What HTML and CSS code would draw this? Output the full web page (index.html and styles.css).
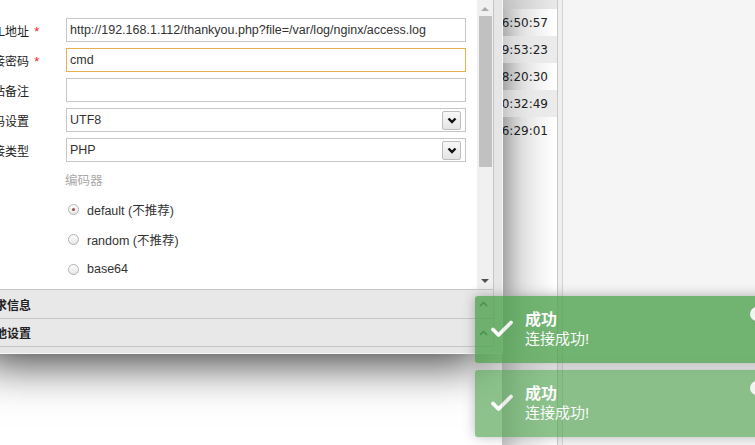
FILE: index.html
```html
<!DOCTYPE html>
<html lang="zh-CN">

<head>
    <meta charset="UTF-8" />
    <title>AntSword - 添加数据</title>
    <link rel="stylesheet" href="styles.css">
</head>

<body>
    <div class="app">
        <div class="grid">
            <div class="grid-head"></div>
            <div class="grid-row"><span>2019-03-17 16:50:57</span></div>
            <div class="grid-row"><span>2019-03-16 19:53:23</span></div>
            <div class="grid-row"><span>2019-03-16 18:20:30</span></div>
            <div class="grid-row"><span>2019-03-15 20:32:49</span></div>
            <div class="grid-row"><span>2019-03-15 16:29:01</span></div>
        </div>
        <div class="splitter"></div>
        <div class="side"></div>
    </div>

    <div class="win">
        <div class="win-head">添加数据</div>
        <div class="win-body">
            <div class="form-wrap">
                <div class="form">
                    <div class="form-row">
                        <label class="form-label">URL地址 <span class="req">*</span></label>
                        <input class="field" value="http://192.168.1.112/thankyou.php?file=/var/log/nginx/access.log">
                    </div>
                    <div class="form-row">
                        <label class="form-label">连接密码 <span class="req">*</span></label>
                        <input class="field focus" value="cmd">
                    </div>
                    <div class="form-row">
                        <label class="form-label">网站备注</label>
                        <input class="field" value="">
                    </div>
                    <div class="form-row">
                        <label class="form-label">编码设置</label>
                        <div class="field select">
                            <span>UTF8</span>
                            <span class="select-btn">
                                <svg width="10" height="7" viewBox="0 0 10 7"><polyline points="1.5,1.5 5,5 8.5,1.5" fill="none" stroke="#111" stroke-width="2.4"/></svg>
                            </span>
                        </div>
                    </div>
                    <div class="form-row">
                        <label class="form-label">连接类型</label>
                        <div class="field select">
                            <span>PHP</span>
                            <span class="select-btn">
                                <svg width="10" height="7" viewBox="0 0 10 7"><polyline points="1.5,1.5 5,5 8.5,1.5" fill="none" stroke="#111" stroke-width="2.4"/></svg>
                            </span>
                        </div>
                    </div>

                    <div class="group-title">编码器</div>
                    <label class="radio checked"><span class="radio-dot"></span>default (不推荐)</label>
                    <label class="radio"><span class="radio-dot"></span>random (不推荐)</label>
                    <label class="radio"><span class="radio-dot"></span>base64</label>
                </div>

                <div class="vscroll">
                    <div class="vscroll-btn">
                        <svg width="8" height="5" viewBox="0 0 8 5"><polygon points="0,5 4,1 8,5" fill="#a9a9a9"/></svg>
                    </div>
                    <div class="vscroll-thumb"></div>
                    <div class="vscroll-track"></div>
                    <div class="vscroll-btn">
                        <svg width="8" height="5" viewBox="0 0 8 5"><polygon points="0,0 8,0 4,4" fill="#505050"/></svg>
                    </div>
                </div>
            </div>

            <div class="acc-bar">
                请求信息
                <svg class="acc-arrow" width="9" height="6" viewBox="0 0 9 6"><polyline points="1,5 4.5,1.5 8,5" fill="none" stroke="#444" stroke-width="1.6"/></svg>
            </div>
            <div class="acc-bar">
                其他设置
                <svg class="acc-arrow" width="9" height="6" viewBox="0 0 9 6"><polyline points="1,5 4.5,1.5 8,5" fill="none" stroke="#444" stroke-width="1.6"/></svg>
            </div>
        </div>
    </div>

    <div class="toasts">
        <div class="toast">
            <svg class="toast-icon" width="24" height="24" viewBox="0 0 24 24"><polyline points="3,12.5 8.5,18 21,5.5" fill="none" stroke="#fff" stroke-width="3.8" stroke-linecap="round" stroke-linejoin="round"/></svg>
            <div class="toast-title">成功</div>
            <div class="toast-msg">连接成功!</div>
            <span class="toast-close"></span>
        </div>
        <div class="toast fading">
            <svg class="toast-icon" width="24" height="24" viewBox="0 0 24 24"><polyline points="3,12.5 8.5,18 21,5.5" fill="none" stroke="#fff" stroke-width="3.8" stroke-linecap="round" stroke-linejoin="round"/></svg>
            <div class="toast-title">成功</div>
            <div class="toast-msg">连接成功!</div>
            <span class="toast-close"></span>
        </div>
    </div>
</body>

</html>
```

FILE: styles.css
```css
body {
    margin: 0;
    width: 755px;
    height: 445px;
    overflow: hidden;
    position: relative;
    background: #fff;
    font-family: "Liberation Sans", "Noto Sans CJK SC", sans-serif;
    font-size: 12.5px;
    color: #333;
}

/* background app */

.app {
    display: flex;
    height: 445px;
}

.grid {
    width: 557px;
    font-family: "DejaVu Sans", "Noto Sans CJK SC", sans-serif;
    font-size: 12px;
    color: #222;
    /* shade the window throws on the last column */
    background: linear-gradient(to right, #fff 502px, #c2c2c2 502px, #e6e6e6 522px, #fff 554px);
}

.grid-head {
    height: 9px;
    background: linear-gradient(to right, #e6e6e6 502px, #c8c8c8 502px, #e8e8e8 554px);
}

.grid-row {
    height: 27px;
    display: flex;
    align-items: center;
    justify-content: flex-end;
    padding-right: 9px;
}

.grid-row:nth-child(odd) {
    background: #ebebeb;
}

.splitter {
    width: 6px;
    box-sizing: border-box;
    border-left: 1px solid #c9c9c9;
    border-right: 1px solid #d3d3d3;
    background: #efefef;
}

.side {
    flex: 1;
    background: #f5f5f5;
}

/* dialog window */

.win {
    position: absolute;
    left: -40px;
    top: -30px;
    width: 543px;
    box-sizing: border-box;
    border: 1px solid #f6f6f6;
    padding: 0 8px 6px 7px;
    background: #e6e6e6;
    box-shadow: 0 28px 44px -20px rgba(0, 0, 0, 0.8);
}

.win-head {
    height: 28px;
    line-height: 28px;
    padding-left: 12px;
    font-weight: bold;
}

.win-body {
    border: 1px solid #c5c5c5;
    background: #fff;
}

.form-wrap {
    display: flex;
    height: 289px;
}

.form {
    flex: 1;
    padding: 18px 0 0 12px;
    overflow: hidden;
}

.form-row {
    display: flex;
    align-items: center;
    height: 24px;
    margin-bottom: 6px;
}

.form-label {
    width: 85px;
    flex: none;
    font-size: 12px;
    color: #222;
}

.req {
    color: #f22;
    font-size: 13px;
    margin-left: 2px;
}

.field {
    width: 400px;
    height: 24px;
    box-sizing: border-box;
    margin: 0;
    border: 1px solid #c6c6c6;
    padding: 0 3px;
    font: inherit;
    color: #333;
    background: #fff;
    outline: none;
}

.field.focus {
    border-color: #e8b14f;
}

.select {
    display: flex;
    align-items: center;
}

.select-btn {
    margin-left: auto;
    margin-right: 1px;
    width: 19px;
    height: 19px;
    box-sizing: border-box;
    border: 1px solid #bdbdbd;
    border-radius: 2px;
    background: linear-gradient(#f8f8f8, #e4e4e4);
    display: flex;
    align-items: center;
    justify-content: center;
}

.group-title {
    margin-left: 84px;
    height: 26px;
    line-height: 26px;
    color: #a9a9a9;
}

.radio {
    margin-left: 87px;
    height: 30px;
    display: flex;
    align-items: center;
}

.radio-dot {
    width: 11px;
    height: 11px;
    box-sizing: border-box;
    margin-right: 8px;
    border: 1px solid #b3b3b3;
    border-radius: 50%;
    background: linear-gradient(#fff, #e6e6e6);
    display: flex;
    align-items: center;
    justify-content: center;
}

.radio.checked .radio-dot::after {
    content: "";
    width: 3px;
    height: 3px;
    border-radius: 50%;
    background: #9c4a4a;
}

.vscroll {
    width: 16px;
    flex: none;
    background: #f0f0f0;
    display: flex;
    flex-direction: column;
}

.vscroll-btn {
    height: 16px;
    display: flex;
    align-items: center;
    justify-content: center;
}

.vscroll-thumb {
    width: 13px;
    height: 151px;
    margin-left: 2px;
    background: #c1c1c1;
}

.vscroll-track {
    flex: 1;
}

.acc-bar {
    height: 29px;
    box-sizing: border-box;
    border-top: 1px solid #c5c5c5;
    background: #e8e8e8;
    display: flex;
    align-items: center;
    padding: 0 5px 0 14px;
    font-size: 12px;
    font-weight: bold;
    color: #222;
}

.acc-bar + .acc-bar {
    height: 28px;
}

.acc-arrow {
    margin-left: auto;
}

/* notifications */

.toasts {
    position: absolute;
    left: 475px;
    top: 296px;
    width: 300px;
}

.toast {
    position: relative;
    height: 67px;
    box-sizing: border-box;
    padding: 15px 15px 14px 50px;
    margin-bottom: 7px;
    border-radius: 3px;
    background: #51a351;
    color: #fff;
    box-shadow: 0 0 12px #999;
    opacity: 0.8;
}

.toast.fading {
    opacity: 0.65;
}

.toast-icon {
    position: absolute;
    left: 15px;
    top: 21px;
}

.toast-title {
    font-size: 16px;
    font-weight: bold;
    line-height: 18px;
}

.toast-msg {
    font-size: 15px;
    line-height: 20px;
}

.toast-close {
    position: absolute;
    right: 11px;
    top: 11px;
    width: 14px;
    height: 14px;
    border-radius: 50%;
    background: #fff;
    opacity: 0.9;
}
```
